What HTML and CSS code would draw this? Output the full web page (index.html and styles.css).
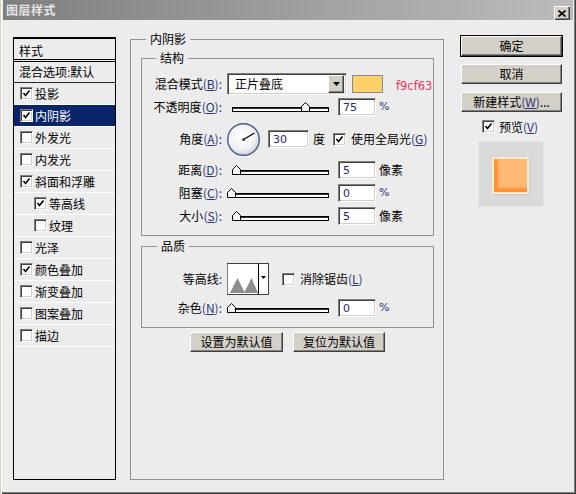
FILE: index.html
```html
<!DOCTYPE html>
<html>
<head>
<meta charset="utf-8">
<title>图层样式</title>
<link rel="stylesheet" href="styles.css">
</head>
<body>
<div class="window">
  <div class="titlebar">
    <span class="title">图层样式</span>
    <span class="close"><svg width="8" height="7" viewBox="0 0 8 7"><path d="M0.5 0.5 L7.5 6.5 M7.5 0.5 L0.5 6.5" stroke="#000" stroke-width="1.6"/></svg></span>
  </div>
  <div class="content">
    <div class="stylelist">
      <div class="list-head">样式</div>
      <div class="list-blend">混合选项<span class="colon">:</span>默认</div>
      <div class="item"><span class="cb"><svg width="9" height="9" viewBox="0 0 9 9"><polyline points="1.5,4 3.5,6.5 7.5,1.5" fill="none" stroke="#000" stroke-width="1.6"/></svg></span>投影</div>
      <div class="item sel"><span class="cb"><svg width="9" height="9" viewBox="0 0 9 9"><polyline points="1.5,4 3.5,6.5 7.5,1.5" fill="none" stroke="#000" stroke-width="1.6"/></svg></span>内阴影</div>
      <div class="item"><span class="cb"></span>外发光</div>
      <div class="item"><span class="cb"></span>内发光</div>
      <div class="item"><span class="cb"><svg width="9" height="9" viewBox="0 0 9 9"><polyline points="1.5,4 3.5,6.5 7.5,1.5" fill="none" stroke="#000" stroke-width="1.6"/></svg></span>斜面和浮雕</div>
      <div class="item sub"><span class="cb"><svg width="9" height="9" viewBox="0 0 9 9"><polyline points="1.5,4 3.5,6.5 7.5,1.5" fill="none" stroke="#000" stroke-width="1.6"/></svg></span>等高线</div>
      <div class="item sub"><span class="cb"></span>纹理</div>
      <div class="item"><span class="cb"></span>光泽</div>
      <div class="item"><span class="cb"><svg width="9" height="9" viewBox="0 0 9 9"><polyline points="1.5,4 3.5,6.5 7.5,1.5" fill="none" stroke="#000" stroke-width="1.6"/></svg></span>颜色叠加</div>
      <div class="item"><span class="cb"></span>渐变叠加</div>
      <div class="item"><span class="cb"></span>图案叠加</div>
      <div class="item"><span class="cb"></span>描边</div>
    </div>

    <div class="group outer">
      <span class="legend">内阴影</span>
      <div class="group struct">
        <span class="legend">结构</span>
        <div class="row r-blend">
          <span class="label">混合模式<span class="acc">(<u>B</u>):</span></span>
          <div class="select field"><span class="sel-text">正片叠底</span><span class="drop btn"><svg width="7" height="4" viewBox="0 0 7 4"><polygon points="0,0 7,0 3.5,4" fill="#000"/></svg></span></div>
          <span class="swatch"></span>
          <span class="hex">f9cf63</span>
        </div>
        <div class="row r-opacity">
          <span class="label">不透明度<span class="acc">(<u>O</u>):</span></span>
          <div class="slider"><div class="track"></div><svg class="thumb" style="left:74px" width="9" height="10" viewBox="0 0 9 10"><polygon points="0.5,9.5 0.5,4.5 4.5,0.5 8.5,4.5 8.5,9.5" fill="#f4f4f4" stroke="#000"/></svg></div>
          <div class="num field">75</div>
          <span class="unit pct">%</span>
        </div>
        <div class="row r-angle">
          <span class="label">角度<span class="acc">(<u>A</u>):</span></span>
          <svg class="dial" width="34" height="35" viewBox="0 0 34 35">
            <defs><radialGradient id="dg" cx="45%" cy="40%" r="60%"><stop offset="0" stop-color="#ffffff"/><stop offset="0.7" stop-color="#f1f1f4"/><stop offset="1" stop-color="#cfd2dc"/></radialGradient></defs>
            <circle cx="16.5" cy="17.5" r="15.8" fill="url(#dg)" stroke="#4a5a84" stroke-width="1.4"/>
            <line x1="16.5" y1="17.5" x2="27.5" y2="11" stroke="#000" stroke-width="1.1"/>
            <rect x="15.5" y="16.5" width="2.2" height="2.2" fill="#000"/>
          </svg>
          <div class="num field angle">30</div>
          <span class="unit deg">度</span>
          <span class="cb gl"><svg width="9" height="9" viewBox="0 0 9 9"><polyline points="1.5,4 3.5,6.5 7.5,1.5" fill="none" stroke="#000" stroke-width="1.6"/></svg></span>
          <span class="cb-text">使用全局光<span class="acc">(<u>G</u>)</span></span>
        </div>
        <div class="row r-val">
          <span class="label">距离<span class="acc">(<u>D</u>):</span></span>
          <div class="slider"><div class="track"></div><svg class="thumb" style="left:5px" width="9" height="10" viewBox="0 0 9 10"><polygon points="0.5,9.5 0.5,4.5 4.5,0.5 8.5,4.5 8.5,9.5" fill="#f4f4f4" stroke="#000"/></svg></div>
          <div class="num field">5</div>
          <span class="unit">像素</span>
        </div>
        <div class="row r-val">
          <span class="label">阻塞<span class="acc">(<u>C</u>):</span></span>
          <div class="slider"><div class="track"></div><svg class="thumb" style="left:0px" width="9" height="10" viewBox="0 0 9 10"><polygon points="0.5,9.5 0.5,4.5 4.5,0.5 8.5,4.5 8.5,9.5" fill="#f4f4f4" stroke="#000"/></svg></div>
          <div class="num field">0</div>
          <span class="unit pct">%</span>
        </div>
        <div class="row r-val">
          <span class="label">大小<span class="acc">(<u>S</u>):</span></span>
          <div class="slider"><div class="track"></div><svg class="thumb" style="left:5px" width="9" height="10" viewBox="0 0 9 10"><polygon points="0.5,9.5 0.5,4.5 4.5,0.5 8.5,4.5 8.5,9.5" fill="#f4f4f4" stroke="#000"/></svg></div>
          <div class="num field">5</div>
          <span class="unit">像素</span>
        </div>
      </div>

      <div class="group quality">
        <span class="legend">品质</span>
        <div class="row r-contour">
          <span class="label">等高线<span class="acc">:</span></span>
          <svg class="contour" width="42" height="32" viewBox="0 0 42 32">
            <rect x="0.5" y="0.5" width="41" height="31" fill="#fff" stroke="#404040"/>
            <line x1="0.5" y1="1" x2="0.5" y2="31" stroke="#808080"/>
            <line x1="31.5" y1="0.5" x2="31.5" y2="31.5" stroke="#000"/>
            <polygon points="3,30 10.5,15 18,30" fill="#8e8e8e"/>
            <polygon points="17,30 24.5,15 31,30" fill="#8e8e8e"/>
            <polygon points="34,13 39,13 36.5,16" fill="#000"/>
          </svg>
          <span class="cb aa"></span>
          <span class="cb-text">消除锯齿<span class="acc">(<u>L</u>)</span></span>
        </div>
        <div class="row r-val r-noise">
          <span class="label">杂色<span class="acc">(<u>N</u>):</span></span>
          <div class="slider"><div class="track"></div><svg class="thumb" style="left:0px" width="9" height="10" viewBox="0 0 9 10"><polygon points="0.5,9.5 0.5,4.5 4.5,0.5 8.5,4.5 8.5,9.5" fill="#f4f4f4" stroke="#000"/></svg></div>
          <div class="num field">0</div>
          <span class="unit pct">%</span>
        </div>
      </div>

      <div class="defaults">
        <div class="btn pbtn w1">设置为默认值</div>
        <div class="btn pbtn w2">复位为默认值</div>
      </div>
    </div>

    <div class="side">
      <div class="btn pbtn default">确定</div>
      <div class="btn pbtn">取消</div>
      <div class="btn pbtn">新建样式<span class="acc">(<u>W</u>)</span>...</div>
      <div class="preview-check">
        <span class="cb"><svg width="9" height="9" viewBox="0 0 9 9"><polyline points="1.5,4 3.5,6.5 7.5,1.5" fill="none" stroke="#000" stroke-width="1.6"/></svg></span>
        <span class="cb-text">预览<span class="acc">(<u>V</u>)</span></span>
      </div>
      <div class="preview">
        <div class="swatch-preview"></div>
      </div>
    </div>
  </div>
</div>
</body>
</html>
```

FILE: styles.css
```css
* { box-sizing: border-box; }
html, body { margin: 0; padding: 0; }
body {
  width: 576px;
  height: 494px;
  overflow: hidden;
  background: #ececec;
  font-family: "Noto Sans CJK SC", "Noto Sans", sans-serif;
  font-size: 12px;
  line-height: 14px;
  color: #000;
}
u { text-decoration: underline; text-underline-offset: 1px; }

.window {
  width: 576px;
  height: 494px;
  background: #ececec;
  padding: 0 3px 3px 3px;
  display: flex;
  flex-direction: column;
  box-shadow: inset 1px 0 #d4d0c8, inset 2px 0 #ffffff, inset -1px -1px #404040, inset -2px -2px #808080;
}

.titlebar {
  height: 20px;
  flex: none;
  display: flex;
  align-items: center;
  padding-left: 3px;
  background: linear-gradient(to right, #7f7f7f, #bcbcbc);
}
.title {
  color: #e4e4e4;
  font-weight: bold;
  letter-spacing: 0.5px;
}
.close {
  margin-left: auto;
  margin-right: 3px;
  align-self: flex-end;
  margin-bottom: 0;
  width: 16px;
  height: 14px;
  background: #d4d0c8;
  display: flex;
  align-items: center;
  justify-content: center;
  box-shadow: inset 1px 1px #ffffff, inset -1px -1px #404040, inset -2px -2px #808080;
}

.content {
  display: flex;
  align-items: flex-start;
  padding: 17px 0 0 10px;
}

/* left style list */
.stylelist {
  width: 103px;
  height: 443px;
  border: 1px solid #000;
  border-top-width: 2px;
  flex: none;
}
.list-head {
  height: 23px;
  padding: 5px 0 0 5px;
  border-bottom: 3px double #000;
}
.list-blend {
  height: 21px;
  padding: 3px 0 0 5px;
  border-bottom: 1px solid #2a2a2a;
}
.colon { color: #6a2a7a; }
.item {
  height: 22px;
  display: flex;
  align-items: center;
  padding-left: 6px;
  border-bottom: 1px solid #ffffff;
}
.item.sub { padding-left: 20px; }
.item.sel { background: #0a246a; color: #fff; }
.item .cb { margin-right: 2px; }

/* checkbox */
.cb {
  width: 13px;
  height: 13px;
  flex: none;
  background: #fff;
  border: 1px solid;
  border-color: #808080 #ffffff #ffffff #808080;
  box-shadow: inset 1px 1px #404040, inset -1px -1px #d4d0c8;
  display: inline-flex;
  align-items: center;
  justify-content: center;
}

/* groups */
.group {
  position: relative;
  border: 1px solid #929292;
  flex: none;
}
.legend {
  position: absolute;
  top: -8px;
  left: 15px;
  padding: 0 4px;
  background: #ececec;
  line-height: 14px;
}
.struct .legend { left: 14px; }
.outer {
  width: 314px;
  height: 441px;
  margin: 2px 0 0 14px;
  padding: 18px 0 0 10px;
}
.struct {
  width: 293px;
  height: 178px;
  padding-top: 14px;
}
.quality {
  width: 293px;
  height: 82px;
  margin-top: 10px;
  padding-top: 16px;
}

.row {
  display: flex;
  align-items: center;
}
.label {
  width: 80px;
  text-align: right;
  margin-right: 5px;
  white-space: nowrap;
  flex: none;
}
.acc { color: #2a3474; }

.field {
  background: #fff;
  border: 1px solid;
  border-color: #808080 #ffffff #ffffff #808080;
  box-shadow: inset 1px 1px #404040, inset -1px -1px #d4d0c8;
}
.btn {
  background: #d4d0c8;
  border: 1px solid;
  border-color: #ffffff #404040 #404040 #ffffff;
  box-shadow: inset -1px -1px #808080;
}

.r-blend { height: 22px; }
.select {
  width: 120px;
  height: 22px;
  display: flex;
  align-items: center;
  padding: 2px;
}
.sel-text { flex: 1; padding-left: 5px; }
.drop {
  width: 16px;
  height: 18px;
  display: flex;
  align-items: center;
  justify-content: center;
}
.swatch {
  width: 31px;
  height: 18px;
  margin-left: 5px;
  background: #fcd068;
  border: 1px solid #8a8a8a;
}
.hex {
  margin-left: 13px;
  margin-top: 4px;
  color: #f2325c;
  font-family: "DejaVu Sans", sans-serif;
  font-size: 11.5px;
}

.r-opacity { height: 18px; margin-top: 3px; }
.r-angle { height: 34px; margin-top: 6px; }
.r-val { height: 18px; margin-top: 5px; }

.slider {
  position: relative;
  width: 106px;
  height: 18px;
  padding: 0 0 4px 5px;
  display: flex;
  align-items: flex-end;
  flex: none;
}
.track {
  width: 97px;
  height: 5px;
  background: #fff;
  border: 1px solid #000;
  box-shadow: inset 0 1px #303030;
}
.thumb {
  position: absolute;
  bottom: 4px;
}
.num {
  width: 38px;
  height: 18px;
  margin-left: 5px;
  padding: 2px 0 0 4px;
  font-family: "DejaVu Sans", sans-serif;
  font-size: 11px;
  line-height: 13px;
  color: #2a2470;
}
.num.angle { width: 41px; margin-left: 7px; }
.unit { margin-left: 3px; }
.unit.pct { color: #2a3474; font-family: "DejaVu Sans", sans-serif; font-size: 11px; }
.unit.deg { margin-left: 4px; }
.cb.gl { margin-left: 8px; }
.cb-text { margin-left: 5px; white-space: nowrap; }
.dial { flex: none; }

.r-contour { height: 32px; }
.contour { flex: none; }
.cb.aa { margin-left: 13px; }
.r-noise { margin-top: 4px; }

.defaults {
  display: flex;
  justify-content: center;
  gap: 10px;
  width: 293px;
  margin-top: 4px;
}
.pbtn {
  height: 20px;
  display: flex;
  align-items: center;
  justify-content: center;
  white-space: nowrap;
}
.w1 { width: 93px; }
.w2 { width: 92px; }

/* right column */
.side {
  width: 101px;
  margin: -1px 0 0 17px;
  display: flex;
  flex-direction: column;
  gap: 8px;
  flex: none;
}
.side .pbtn { width: 101px; }
.pbtn.default {
  outline: 1px solid #000;
  outline-offset: 0;
}
.preview-check {
  display: flex;
  align-items: center;
  height: 13px;
  padding-left: 21px;
}
.preview-check .cb-text { margin-left: 4px; }
.preview {
  width: 66px;
  height: 66px;
  margin-left: 17px;
  background: #d9d9d9;
  border: 1px solid #e6e6e6;
  padding: 15px 0 0 13px;
}
.swatch-preview {
  width: 37px;
  height: 37px;
  background: #ffb976;
  border: 2px solid #fcebd0;
  box-shadow: inset 4px -4px 2px #ff9130, 1px 1px 1px rgba(0,0,0,0.06);
}
```
